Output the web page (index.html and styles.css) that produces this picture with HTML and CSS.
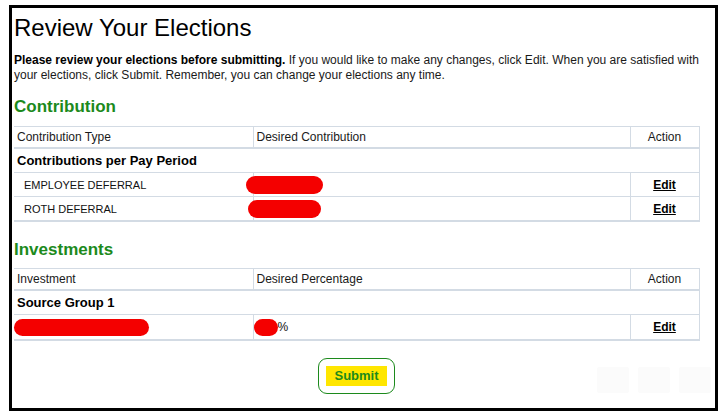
FILE: index.html
```html
<!DOCTYPE html>
<html>
<head>
<meta charset="utf-8">
<link rel="stylesheet" href="styles.css">
</head>
<body>
<div class="frame">
  <h1 class="title">Review Your Elections</h1>
  <p class="intro"><b>Please review your elections before submitting.</b> If you would like to make any changes, click Edit. When you are satisfied with your elections, click Submit. Remember, you can change your elections any time.</p>

  <h2 class="section">Contribution</h2>
  <table class="grid">
    <colgroup><col class="c1"><col class="c2"><col class="c3"></colgroup>
    <thead>
      <tr><th>Contribution Type</th><th>Desired Contribution</th><th class="act">Action</th></tr>
    </thead>
    <tbody>
      <tr class="group"><td colspan="3">Contributions per Pay Period</td></tr>
      <tr class="data"><td class="name">EMPLOYEE DEFERRAL</td><td><span class="redact r1"></span></td><td class="act"><a class="edit">Edit</a></td></tr>
      <tr class="data last"><td class="name">ROTH DEFERRAL</td><td><span class="redact r2"></span></td><td class="act"><a class="edit">Edit</a></td></tr>
    </tbody>
  </table>

  <h2 class="section sec2">Investments</h2>
  <table class="grid">
    <colgroup><col class="c1"><col class="c2"><col class="c3"></colgroup>
    <thead>
      <tr><th>Investment</th><th>Desired Percentage</th><th class="act">Action</th></tr>
    </thead>
    <tbody>
      <tr class="group"><td colspan="3">Source Group 1</td></tr>
      <tr class="data last tall"><td class="flush"><span class="redact r3"></span></td><td class="flush"><span class="redact r4"></span>%</td><td class="act"><a class="edit">Edit</a></td></tr>
    </tbody>
  </table>

  <div class="actions">
    <div class="submit-wrap"><span class="submit">Submit</span></div>
  </div>

  <div class="toolbar">
    <span class="tool"></span><span class="tool"></span><span class="tool"></span>
  </div>
</div>
</body>
</html>
```
FILE: styles.css
```css
html, body {
  margin: 0;
  padding: 0;
  background: #fff;
}
body {
  font-family: "Liberation Sans", Arial, sans-serif;
  color: #111;
}
.frame {
  position: relative;
  box-sizing: border-box;
  margin: 5px 0 0 9px;
  width: 709px;
  height: 406px;
  border: 3px solid #000;
  padding: 0 0 0 2px;
}
.title {
  margin: 6px 0 0 0;
  font-size: 24px;
  line-height: 28px;
  font-weight: normal;
  color: #000;
}
.intro {
  margin: 11px 0 0 0;
  width: 690px;
  font-size: 12px;
  line-height: 15px;
  color: #1a1a1a;
}
.intro b { color: #000; }
.section {
  margin: 14px 0 9px 0;
  font-size: 17px;
  line-height: 20px;
  font-weight: bold;
  color: #1c8a1c;
}
.sec2 {
  margin-top: 18px;
  margin-bottom: 8px;
}
.grid {
  border-collapse: collapse;
  width: 685px;
  table-layout: fixed;
  font-size: 12px;
  border-top: 1px solid #d3dbe4;
  border-right: 1px solid #d3dbe4;
  border-bottom: 2px solid #d3dbe4;
}
.c1 { width: 239px; }
.c2 { width: 377px; }
.c3 { width: 69px; }
.grid th {
  height: 20px;
  padding: 0 3px;
  font-weight: normal;
  text-align: left;
  color: #1a1a1a;
  border-bottom: 2px solid #d3dbe4;
  border-left: 1px solid #d3dbe4;
}
.grid th:first-child { border-left: none; }
.grid th.act, .grid td.act { text-align: center; }
.grid td {
  padding: 0 4px;
  border-bottom: 1px solid #d3dbe4;
  border-left: 1px solid #d3dbe4;
  color: #111;
}
.grid td:first-child { border-left: none; }
.group td {
  height: 23px;
  padding-left: 3px;
  font-size: 13px;
  font-weight: bold;
  color: #000;
}
.data td { height: 23px; }
.data.tall td { height: 24px; }
.data td.name {
  padding-left: 10px;
  font-size: 11px;
}
.data td.flush {
  padding-left: 0;
  font-size: 12px;
}
.edit {
  font-weight: bold;
  font-size: 12px;
  color: #000;
  text-decoration: underline;
}
.redact {
  display: inline-block;
  background: #f40000;
  border-radius: 9px;
  height: 18px;
  vertical-align: middle;
}
.r1 { width: 77px; margin-left: -12px; }
.r2 { width: 73px; margin-left: -10px; }
.r3 { width: 135px; height: 17px; }
.r4 { width: 24px; height: 17px; }
.actions {
  display: flex;
  justify-content: center;
  width: 685px;
  margin-top: 17px;
}
.submit-wrap {
  box-sizing: border-box;
  width: 77px;
  height: 36px;
  border: 1px solid #1c8a1c;
  border-radius: 9px;
  display: flex;
  align-items: center;
  justify-content: center;
}
.submit {
  display: block;
  width: 61px;
  height: 20px;
  line-height: 20px;
  background: #ffe600;
  color: #1c8a1c;
  font-weight: bold;
  font-size: 13px;
  text-align: center;
}
.toolbar {
  position: absolute;
  right: 4px;
  bottom: 15px;
  display: flex;
  gap: 9px;
}
.tool {
  display: block;
  width: 32px;
  height: 26px;
  background: #fbfbfb;
  border-radius: 2px;
}
```
